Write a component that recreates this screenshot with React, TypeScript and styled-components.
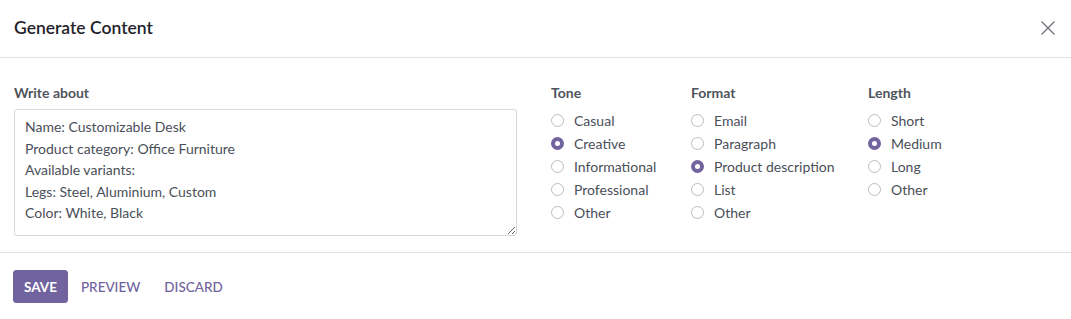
import React from "react";
import styled, { createGlobalStyle } from "styled-components";

const GlobalStyle = createGlobalStyle`
  body {
    margin: 0;
    background: #ffffff;
    font-family: Lato, "Noto Sans", sans-serif;
    color: #4a4f59;
  }
`;

const OPTION_GROUPS = [
  {
    title: "Tone",
    width: 140,
    selected: "Creative",
    options: ["Casual", "Creative", "Informational", "Professional", "Other"],
  },
  {
    title: "Format",
    width: 177,
    selected: "Product description",
    options: ["Email", "Paragraph", "Product description", "List", "Other"],
  },
  {
    title: "Length",
    width: 150,
    selected: "Medium",
    options: ["Short", "Medium", "Long", "Other"],
  },
];

const PROMPT = `Name: Customizable Desk
Product category: Office Furniture
Available variants:
Legs: Steel, Aluminium, Custom
Color: White, Black`;

function App() {
  return (
    <Dialog>
      <GlobalStyle />
      <Header>
        <Title>Generate Content</Title>
        <CloseButton aria-label="Close">
          <svg width="16" height="16" viewBox="0 0 16 16">
            <path
              d="M1.5 1.5 L14.5 14.5 M14.5 1.5 L1.5 14.5"
              stroke="#6f7379"
              strokeWidth="1.4"
              fill="none"
            />
          </svg>
        </CloseButton>
      </Header>

      <Body>
        <PromptColumn>
          <FieldLabel>Write about</FieldLabel>
          <PromptInput defaultValue={PROMPT} />
        </PromptColumn>

        {OPTION_GROUPS.map((group) => (
          <OptionGroup key={group.title} $width={group.width}>
            <FieldLabel>{group.title}</FieldLabel>
            <OptionList>
              {group.options.map((option) => (
                <Option key={option}>
                  <RadioDot $checked={option === group.selected} />
                  {option}
                </Option>
              ))}
            </OptionList>
          </OptionGroup>
        ))}
      </Body>

      <Footer>
        <PrimaryButton>Save</PrimaryButton>
        <LinkButton>Preview</LinkButton>
        <LinkButton>Discard</LinkButton>
      </Footer>
    </Dialog>
  );
}

export default App;

const Dialog = styled.div`
  width: 1071px;
  height: 319px;
  display: flex;
  flex-direction: column;
  background: #fff;
`;

const Header = styled.div`
  height: 58px;
  flex: none;
  box-sizing: border-box;
  display: flex;
  align-items: center;
  justify-content: space-between;
  padding: 0 15px 2px 14px;
  border-bottom: 1px solid #dee0e3;
`;

const Title = styled.h4`
  margin: 0;
  font-size: 17.5px;
  font-weight: 600;
  color: #1f2329;
`;

const CloseButton = styled.button`
  border: 0;
  background: none;
  padding: 0;
  width: 16px;
  height: 16px;
  cursor: pointer;
  display: flex;
`;

const Body = styled.div`
  flex: none;
  display: flex;
  padding: 24px 14px 16px;
  border-bottom: 1px solid #dee0e3;
`;

const PromptColumn = styled.div`
  width: 503px;
  margin-right: 34px;
  display: flex;
  flex-direction: column;
`;

const FieldLabel = styled.div`
  font-size: 14px;
  font-weight: 700;
  line-height: 21px;
  color: #4f545c;
`;

const PromptInput = styled.textarea`
  margin-top: 6px;
  height: 127px;
  box-sizing: border-box;
  padding: 6px 10px;
  border: 1px solid #d5d8dc;
  border-radius: 3px;
  font-family: Lato, "Noto Sans", sans-serif;
  font-size: 14px;
  line-height: 21.5px;
  color: #4a4f59;
  resize: vertical;
  outline: none;
`;

const OptionGroup = styled.div<{ $width: number }>`
  width: ${(p) => p.$width}px;
  display: flex;
  flex-direction: column;
`;

const OptionList = styled.div`
  margin-top: 6px;
  display: flex;
  flex-direction: column;
`;

const Option = styled.label`
  display: flex;
  align-items: center;
  gap: 10px;
  height: 23.1px;
  font-size: 14px;
  color: #4a4f59;
  white-space: nowrap;
`;

const RadioDot = styled.span<{ $checked: boolean }>`
  width: 13px;
  height: 13px;
  box-sizing: border-box;
  border-radius: 50%;
  flex: none;
  border: ${(p) => (p.$checked ? "4px solid #71639e" : "1px solid #b9bdc2")};
  background: #fff;
`;

const Footer = styled.div`
  flex: none;
  display: flex;
  align-items: center;
  gap: 2px;
  padding: 17px 13px;
`;

const ButtonBase = styled.button`
  height: 33px;
  padding: 0 10px;
  border-radius: 3px;
  font-family: Lato, "Noto Sans", sans-serif;
  font-size: 13.5px;
  text-transform: uppercase;
  cursor: pointer;
`;

const PrimaryButton = styled(ButtonBase)`
  background: #71639e;
  border: 1px solid #71639e;
  color: #fff;
  font-weight: 700;
`;

const LinkButton = styled(ButtonBase)`
  background: none;
  border: 1px solid transparent;
  color: #71639e;
  font-weight: 500;
`;
